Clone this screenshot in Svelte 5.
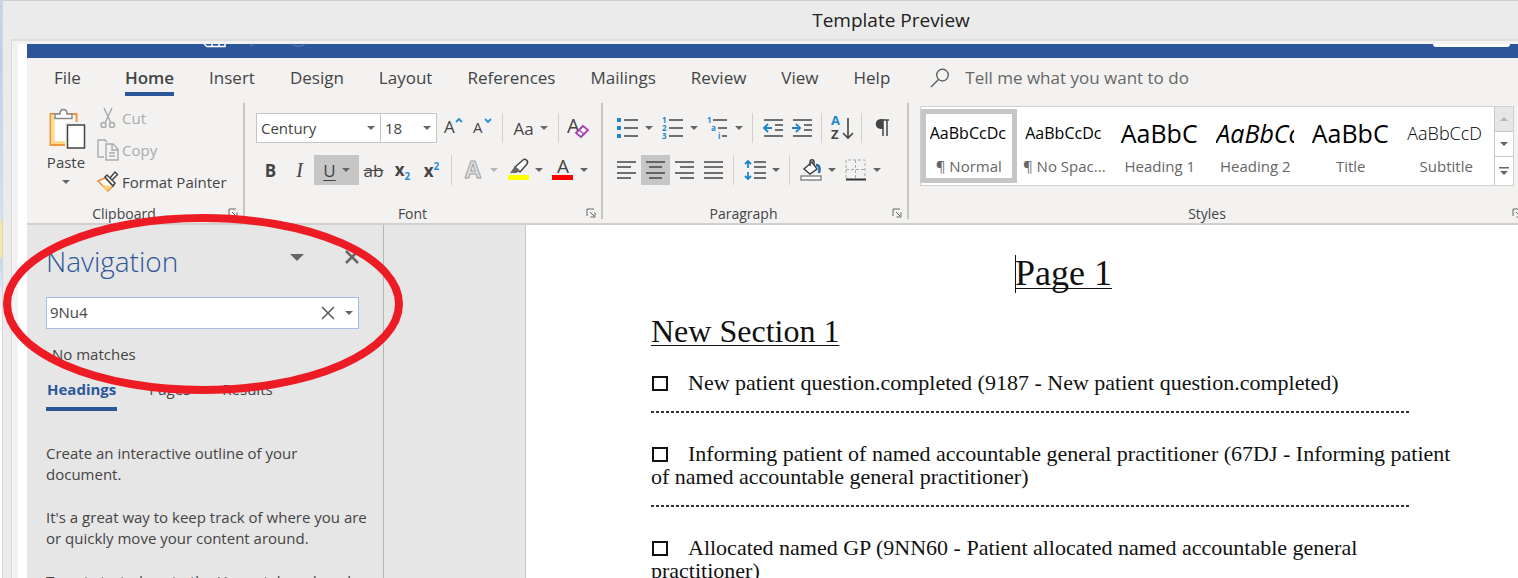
<script>
    const tabs = ['File', 'Home', 'Insert', 'Design', 'Layout', 'References', 'Mailings', 'Review', 'View', 'Help'];

    const styles = [
        { name: '¶ Normal', sample: 'AaBbCcDc', kind: 'body' },
        { name: '¶ No Spac...', sample: 'AaBbCcDc', kind: 'body' },
        { name: 'Heading 1', sample: 'AaBbC', kind: 'big' },
        { name: 'Heading 2', sample: 'AaBbCc', kind: 'big slanted' },
        { name: 'Title', sample: 'AaBbC', kind: 'big' },
        { name: 'Subtitle', sample: 'AaBbCcD', kind: 'light' }
    ];

    const questions = [
        'New patient question.completed (9187 - New patient question.completed)',
        'Informing patient of named accountable general practitioner (67DJ - Informing patient of named accountable general practitioner)',
        'Allocated named GP (9NN60 - Patient allocated named accountable general practitioner)'
    ];

    let activeTab = 'Home';
    let activeStyle = '¶ Normal';
    let search = '9Nu4';
</script>

{#snippet arrow()}
    <svg class="arrow" width="8" height="4" viewBox="0 0 8 4"><path d="M0 0h8L4 4z" /></svg>
{/snippet}

{#snippet launcher(label)}
    <button class="launcher" aria-label={label}>
        <svg width="10" height="10" viewBox="0 0 10 10" fill="none" stroke="#666"><path d="M1 8V1h7M4 4l4 4M9 4.500v4.500H4.500" /></svg>
    </button>
{/snippet}

{#snippet lines(d)}
    <svg width="21" height="20" viewBox="0 0 21 20" fill="none" stroke="#444" stroke-width="1.500"><path {d} /></svg>
{/snippet}

<div class="backdrop">
    <div class="dialog">
        <header>Template Preview</header>
        <div class="frame">
            <div class="word">
                <div class="titlebar">
                    <svg class="quick" width="104" height="3" viewBox="0 0 104 3" fill="none">
                        <path d="M0 0l3 2.500h18V0M8 0v2M15 0v2" stroke="#fff" stroke-width="1.500" />
                        <path d="M46 2l4-2M88 0c4 3 9 3 13 0" stroke="#5b80bd" />
                    </svg>
                    <span class="pill"></span>
                </div>

                <nav class="tabs">
                    {#each tabs as tab}
                        <button class:active={tab === activeTab} onclick={() => (activeTab = tab)}>{tab}</button>
                    {/each}
                    <label class="tell">
                        <svg width="20" height="20" viewBox="0 0 20 20" fill="none" stroke="#555" stroke-width="1.300"><circle cx="12.500" cy="7" r="5.800" /><path d="M8.500 11.500L1 19" /></svg>
                        <input placeholder="Tell me what you want to do" />
                    </label>
                </nav>

                <div class="ribbon">
                    <section class="group clipboard">
                        <div class="content">
                            <button class="paste">
                                <svg width="38" height="42" viewBox="0 0 38 42" fill="none">
                                    <path d="M3.500 6h26v31h-26z" fill="#fff" stroke="#f0963c" stroke-width="2" />
                                    <path d="M6 8v26.500h13" stroke="#fbdc8c" stroke-width="3" />
                                    <path d="M8 10.500V6h5c0-6 7-6 7 0h5v4.500z" fill="#fff" stroke="#888" stroke-width="1.500" />
                                    <path d="M18 14h20v28H18z" fill="#f3f2f1" />
                                    <path d="M20.500 17h17v23h-17z" fill="#fff" stroke="#444" stroke-width="1.500" />
                                </svg>
                                Paste
                                {@render arrow()}
                            </button>
                            <div class="commands">
                                <button disabled>
                                    <svg width="22" height="22" viewBox="0 0 22 22" fill="none" stroke="#aaa" stroke-width="1.500"><path d="M7 1l7 15M15 1L8 16" /><circle cx="6.500" cy="18" r="2.500" /><circle cx="15" cy="18" r="2.500" /></svg>
                                    Cut
                                </button>
                                <button disabled>
                                    <svg width="22" height="22" viewBox="0 0 22 22" fill="none" stroke="#aaa" stroke-width="1.400"><path d="M7 18H1V1h7l2 2M9 5h7l5 5v11H9zM15 5v6h6M12 14h6M12 17h6" /></svg>
                                    Copy
                                </button>
                                <button>
                                    <svg width="22" height="22" viewBox="0 0 22 22" fill="none">
                                        <path d="M1 10l7-3 8 8-5 5z" fill="#fff" stroke="#ee8a35" stroke-width="1.500" />
                                        <path d="M5 14l9 1-4 5z" fill="#fbce73" />
                                        <path d="M8 6l2-2 8 8-2 3zM13 7l5-6 2.500 2.500-5 5" fill="#fff" stroke="#444" stroke-width="1.500" />
                                    </svg>
                                    Format Painter
                                </button>
                            </div>
                        </div>
                        <footer><span>Clipboard</span>{@render launcher('Clipboard settings')}</footer>
                    </section>

                    <section class="group font">
                        <div class="content">
                            <div class="row">
                                <span class="combo family">
                                    <select aria-label="Font"><option>Century</option></select>
                                    {@render arrow()}
                                </span>
                                <span class="combo size">
                                    <select aria-label="Font size"><option>18</option></select>
                                    {@render arrow()}
                                </span>
                                <button class="tool" aria-label="Grow font">
                                    <svg width="20" height="22" viewBox="0 0 20 22"><text x="0" y="16" font-size="17" fill="#444">A</text><path d="M12 5l3-3 3 3" fill="none" stroke="#2b8fd0" stroke-width="1.800" /></svg>
                                </button>
                                <button class="tool" aria-label="Shrink font">
                                    <svg width="20" height="22" viewBox="0 0 20 22"><text x="0" y="16" font-size="15" fill="#444">A</text><path d="M12 2l3 3 3-3" fill="none" stroke="#2b8fd0" stroke-width="1.800" /></svg>
                                </button>
                                <i class="sep"></i>
                                <button class="split"><span class="case">Aa</span>{@render arrow()}</button>
                                <i class="sep"></i>
                                <button class="tool" aria-label="Clear formatting">
                                    <svg width="24" height="24" viewBox="0 0 24 24"><text x="0" y="17" font-size="20" fill="#444">A</text><path d="M9 17l7-7 5 4-7 7z" fill="#fff" stroke="#a33fb1" stroke-width="1.800" /><path d="M12 14l5 4" stroke="#a33fb1" stroke-width="1.500" /></svg>
                                </button>
                            </div>
                            <div class="row">
                                <button class="tool letter bold">B</button>
                                <button class="tool letter italic">I</button>
                                <button class="split pressed"><span class="letter underline">U</span>{@render arrow()}</button>
                                <button class="tool letter strike">ab</button>
                                <button class="tool letter bold"><span class="script">x<sub>2</sub></span></button>
                                <button class="tool letter bold"><span class="script">x<sup>2</sup></span></button>
                                <i class="sep"></i>
                                <button class="split off" aria-label="Text effects">
                                    <svg width="22" height="24" viewBox="0 0 22 24"><text x="3" y="20" font-size="23" font-weight="bold" fill="#ddd" stroke="#a5a5a5">A</text></svg>
                                    {@render arrow()}
                                </button>
                                <button class="split" aria-label="Highlight colour">
                                    <svg width="22" height="24" viewBox="0 0 22 24" fill="none"><path d="M1 17h21v5H1z" fill="#ff0" /><path d="M8 9l8-7c2-2 6 1 4 4l-7 8z" fill="#fff" stroke="#444" stroke-width="1.500" /><path d="M8 8l5 5-4 2H3z" fill="#666" /></svg>
                                    {@render arrow()}
                                </button>
                                <button class="split" aria-label="Font colour">
                                    <svg width="22" height="24" viewBox="0 0 22 24"><path d="M0 17h21v5H0z" fill="red" /><text x="5" y="15" font-size="19" fill="#444">A</text></svg>
                                    {@render arrow()}
                                </button>
                            </div>
                        </div>
                        <footer><span>Font</span>{@render launcher('Font settings')}</footer>
                    </section>

                    <section class="group paragraph">
                        <div class="content">
                            <div class="row">
                                <button class="split" aria-label="Bullets">
                                    <svg width="22" height="22" viewBox="0 0 22 22"><path d="M0 1h4v4H0zM0 9h4v4H0zM0 17h4v4H0z" fill="#1e86c8" /><path d="M7 3h14M7 11h14M7 19h14" stroke="#444" stroke-width="1.500" /></svg>
                                    {@render arrow()}
                                </button>
                                <button class="split" aria-label="Numbering">
                                    <svg width="22" height="24" viewBox="0 0 22 24"><g font-size="8" font-weight="bold" fill="#1e86c8"><text x="0" y="7">1</text><text x="0" y="15">2</text><text x="0" y="23">3</text></g><path d="M7 4h14M7 12h14M7 20h14" stroke="#444" stroke-width="1.500" /></svg>
                                    {@render arrow()}
                                </button>
                                <button class="split" aria-label="Multilevel list">
                                    <svg width="22" height="24" viewBox="0 0 22 24"><g font-size="8" font-weight="bold" fill="#1e86c8"><text x="0" y="7">1</text><text x="4" y="15">a</text><text x="11" y="23">i</text></g><path d="M6 4h14M11 12h9M15 20h5" stroke="#444" stroke-width="1.500" /></svg>
                                    {@render arrow()}
                                </button>
                                <i class="sep"></i>
                                <button class="tool" aria-label="Decrease indent">
                                    <svg width="20" height="20" viewBox="0 0 20 20" fill="none" stroke="#444" stroke-width="1.500"><path d="M1 2h19M12 7h8M12 12h8M1 18h19" /><path d="M9 10H1M5 6l-4 4 4 4" stroke="#1e86c8" stroke-width="1.800" /></svg>
                                </button>
                                <button class="tool" aria-label="Increase indent">
                                    <svg width="20" height="20" viewBox="0 0 20 20" fill="none" stroke="#444" stroke-width="1.500"><path d="M1 2h19M12 7h8M12 12h8M1 18h19" /><path d="M0 10h8M4 6l4 4-4 4" stroke="#1e86c8" stroke-width="1.800" /></svg>
                                </button>
                                <i class="sep"></i>
                                <button class="tool" aria-label="Sort">
                                    <svg width="24" height="24" viewBox="0 0 24 24"><g font-size="13" font-weight="bold"><text x="1" y="9" fill="#1e86c8">A</text><text x="1" y="23" fill="#444">Z</text></g><path d="M18 2v20M13 17l5 5 5-5" fill="none" stroke="#444" stroke-width="1.600" /></svg>
                                </button>
                                <i class="sep"></i>
                                <button class="tool" aria-label="Show paragraph marks">
                                    <svg width="14" height="18" viewBox="0 0 14 18"><path d="M6 1h8M8 1v16M12 1v16" stroke="#444" stroke-width="1.500" /><path d="M8 0v10H6C-1 10-1 0 6 0z" fill="#444" /></svg>
                                </button>
                            </div>
                            <div class="row">
                                <button class="tool" aria-label="Align left">{@render lines('M1 2h19M1 7h14M1 13h19M1 18h14')}</button>
                                <button class="tool pressed" aria-label="Centre">{@render lines('M1 2h19M4 7h13M1 13h19M4 18h13')}</button>
                                <button class="tool" aria-label="Align right">{@render lines('M1 2h19M6 7h14M1 13h19M6 18h14')}</button>
                                <button class="tool" aria-label="Justify">{@render lines('M1 2h19M1 7h19M1 13h19M1 18h19')}</button>
                                <i class="sep"></i>
                                <button class="split" aria-label="Line spacing">
                                    <svg width="22" height="20" viewBox="0 0 22 20" fill="none" stroke="#444" stroke-width="1.500"><path d="M10 2h12M10 7h12M10 13h12M10 18h12" /><path d="M4 1v7M1 4l3-3 3 3M4 12v7M1 16l3 3 3-3" stroke="#1e86c8" stroke-width="1.800" /></svg>
                                    {@render arrow()}
                                </button>
                                <i class="sep"></i>
                                <button class="split" aria-label="Shading">
                                    <svg width="22" height="22" viewBox="0 0 22 22" fill="none" stroke="#444" stroke-width="1.500"><path d="M1 17h20v4H1z" fill="#fff" stroke="#888" /><path d="M12 3l5 7-7 5-6-5z" fill="#fff" /><path d="M10 7V3c0-3 4-3 4 0v3" /><path d="M16 6c4 0 4 4 3 8" stroke="#1c6bb5" stroke-width="2.500" /></svg>
                                    {@render arrow()}
                                </button>
                                <button class="split" aria-label="Borders">
                                    <svg width="22" height="22" viewBox="0 0 22 22" fill="none"><path d="M1 19V1h19v18M10.500 1v18M1 10.500h19" stroke="#aaa" stroke-dasharray="3 2" /><path d="M1 20.500h20" stroke="#333" stroke-width="2" /></svg>
                                    {@render arrow()}
                                </button>
                            </div>
                        </div>
                        <footer><span>Paragraph</span>{@render launcher('Paragraph settings')}</footer>
                    </section>

                    <section class="group styles">
                        <div class="gallery">
                            {#each styles as style}
                                <button class="style" class:chosen={style.name === activeStyle} onclick={() => (activeStyle = style.name)}>
                                    <span class="sample {style.kind}">{style.sample}</span>
                                    <span>{style.name}</span>
                                </button>
                            {/each}
                            <div class="scroller">
                                <button class="off" aria-label="Previous styles">
                                    <svg class="arrow" width="8" height="4" viewBox="0 0 8 4"><path d="M0 4h8L4 0z" /></svg>
                                </button>
                                <button aria-label="Next styles">{@render arrow()}</button>
                                <button aria-label="More styles">
                                    <svg class="arrow" width="10" height="8" viewBox="0 0 10 8"><path d="M0 0h10v1.500H0zM1 4h8L5 8z" /></svg>
                                </button>
                            </div>
                        </div>
                        <footer><span>Styles</span>{@render launcher('Styles pane')}</footer>
                    </section>
                </div>

                <main>
                    <aside>
                        <div class="heading">
                            <h2>Navigation</h2>
                            <button aria-label="Pane options"><svg width="14" height="7" viewBox="0 0 14 7"><path d="M0 0h14L7 7z" fill="#666" /></svg></button>
                            <button aria-label="Close pane"><svg width="14" height="14" viewBox="0 0 14 14"><path d="M1 1l12 12M13 1L1 13" stroke="#666" stroke-width="2.500" /></svg></button>
                        </div>
                        <div class="search">
                            <input aria-label="Search document" bind:value={search} />
                            <button aria-label="Clear search" onclick={() => (search = '')}><svg width="12" height="12" viewBox="0 0 12 12"><path d="M0 0l12 12M12 0L0 12" stroke="#555" stroke-width="1.500" /></svg></button>
                            <button class="more" aria-label="Search options">{@render arrow()}</button>
                        </div>
                        <p class="result">No matches</p>
                        <div class="views">
                            <button class="active">Headings</button>
                            <button>Pages</button>
                            <button>Results</button>
                        </div>
                        <div class="help">
                            <p>Create an interactive outline of your document.</p>
                            <p>It's a great way to keep track of where you are or quickly move your content around.</p>
                            <p>To get started, go to the Home tab and apply</p>
                        </div>
                        <svg class="ring" width="402" height="182" viewBox="0 0 402 182" fill="none"><ellipse cx="201" cy="91" rx="196" ry="86" stroke="#ed1c24" stroke-width="8" /></svg>
                    </aside>
                    <article>
                        <h1><span class="caret"></span>Page 1</h1>
                        <h3>New Section 1</h3>
                        {#each questions as question}
                            <label class="question"><input type="checkbox" />{question}</label>
                            <hr />
                        {/each}
                    </article>
                </main>
            </div>
        </div>
    </div>
</div>

<style>
    :global(body) {
        margin: 0;
    }

    .backdrop {
        box-sizing: border-box;
        height: 100vh;
        padding-left: 2px;
        overflow: hidden;
        background: linear-gradient(#c8d4e4 0, #b9d0f3 60px, #d6e2f2 220px, #f5e9a0 222px, #f5e9a0 256px, #c3d8f5 260px, #fff 320px);
        font-family: "Open Sans", "Noto Sans", sans-serif;
        font-size: 15px;
        color: #444;
    }

    .backdrop * {
        box-sizing: border-box;
    }

    button {
        display: flex;
        align-items: center;
        justify-content: center;
        padding: 0;
        border: none;
        background: none;
        font: inherit;
        color: inherit;
    }

    input,
    select {
        min-width: 0;
        padding: 0;
        border: none;
        outline: none;
        background: none;
        font: inherit;
        color: inherit;
    }

    svg {
        flex: none;
        overflow: visible;
    }

    .arrow {
        fill: #666;
    }

    .off .arrow {
        fill: #b5b5b5;
    }

    .dialog {
        display: flex;
        flex-direction: column;
        height: 100%;
        border-top: 1px solid #cfcfcf;
        border-left: 1px solid #d5d5d5;
        background: #ebebeb;
    }

    header {
        padding-left: 261px;
        line-height: 38px;
        font-size: 19px;
        text-align: center;
        color: #222;
    }

    .frame {
        flex: 1;
        min-height: 0;
        margin-left: 8px;
        padding: 3px 0 0 6px;
        border-top: 2px solid #dedede;
        border-left: 1px solid #dadada;
        background: #f2f2f2;
    }

    .word {
        display: flex;
        flex-direction: column;
        height: 100%;
        border-left: 9px solid #fff;
    }

    .titlebar {
        display: flex;
        flex: none;
        justify-content: space-between;
        height: 14px;
        padding: 0 8px 0 177px;
        background: #2b579a;
    }

    .pill {
        width: 77px;
        height: 3px;
        border-radius: 0 0 3px 3px;
        background: #fff;
    }

    .tabs {
        display: flex;
        gap: 35px;
        height: 40px;
        padding-left: 27px;
        background: #f3f2f1;
        font-size: 17px;
    }

    .tabs button {
        border: solid transparent;
        border-width: 4px 0;
        height: 37px;
        margin-top: 1px;
    }

    .tabs button.active {
        margin-left: 9px;
        border-bottom-color: #2b579a;
        font-weight: 600;
    }

    .tell {
        display: flex;
        flex: 1;
        align-items: center;
        gap: 15px;
        margin-left: 5px;
    }

    .tell input {
        flex: 1;
        padding-bottom: 2px;
    }

    .tell input::placeholder {
        color: #666;
        opacity: 1;
    }

    .ribbon {
        display: flex;
        flex: none;
        padding: 5px 0 4px;
        overflow: hidden;
        border-bottom: 2px solid #d2d0ce;
        background: #f3f2f1;
    }

    .group {
        display: flex;
        flex: none;
        flex-direction: column;
        justify-content: space-between;
        height: 116px;
        border-right: 2px solid #c8c6c4;
    }

    .group footer {
        display: flex;
        align-items: center;
        height: 12px;
        padding-right: 5px;
        font-size: 14px;
    }

    .group footer span {
        flex: 1;
        padding-right: 7px;
        text-align: center;
    }

    .launcher {
        width: 10px;
        height: 10px;
    }

    .clipboard {
        width: 218px;
    }

    .clipboard .content {
        display: flex;
        padding-left: 19px;
    }

    .paste {
        flex-direction: column;
        justify-content: start;
        width: 40px;
        height: 90px;
        margin-right: 11px;
        padding-top: 5px;
        line-height: 24px;
    }

    .paste .arrow {
        margin-top: 6px;
    }

    .commands button {
        gap: 3px;
        height: 32px;
        padding-bottom: 2px;
    }

    .commands button:disabled {
        color: #aaa;
    }

    .font {
        width: 358px;
        padding-left: 11px;
    }

    .font footer,
    .paragraph footer {
        margin-left: -10px;
    }

    .paragraph {
        width: 306px;
        padding-left: 9px;
    }

    .row {
        display: flex;
        height: 30px;
        margin-top: 10px;
    }

    .row + .row {
        margin-top: 12px;
    }

    .row .split,
    .row .tool {
        height: 30px;
    }

    .tool {
        width: 29px;
    }

    .split {
        width: 45px;
        gap: 6px;
    }

    .pressed {
        background: #c6c6c6;
    }

    .sep {
        width: 1px;
        margin: 0 5px;
        background: #d2d0ce;
    }

    .combo {
        display: grid;
        align-items: center;
        border: 1px solid #c6c6c6;
        background: #fff;
    }

    .combo > :global(*) {
        grid-area: 1 / 1;
    }

    .combo .arrow {
        justify-self: end;
        margin-right: 5px;
        pointer-events: none;
    }

    .combo select {
        width: 100%;
        padding-left: 4px;
        appearance: none;
    }

    .family {
        width: 125px;
    }

    .size {
        width: 57px;
        margin: 0 2px 0 -1px;
    }

    .case,
    .letter {
        font-size: 17px;
    }

    .bold {
        font-weight: bold;
    }

    .italic {
        font-family: "Liberation Serif", serif;
        font-size: 20px;
        font-style: italic;
    }

    .underline {
        text-decoration: underline;
        text-underline-offset: 3px;
    }

    .strike {
        text-decoration: line-through;
    }

    .script sub,
    .script sup {
        font-size: 10px;
        line-height: 10px;
        color: #2b8fd0;
    }

    .styles {
        flex: 1;
        min-width: 0;
        margin-right: -9px;
        border: none;
    }

    .gallery {
        display: flex;
        height: 80px;
        margin: 3px 13px 0 11px;
        border: 1px solid #d2d0ce;
        background: #fff;
    }

    .style {
        flex: 1;
        flex-direction: column;
        justify-content: start;
        min-width: 0;
        margin: 2px 0;
        padding: 6px 5px 0;
        overflow: hidden;
        line-height: 30px;
        color: #666;
        white-space: nowrap;
    }

    .style.chosen {
        border: 5px solid #c6c6c6;
        padding: 1px 0 0;
    }

    .sample {
        flex: none;
        width: 78px;
        height: 36px;
        overflow: hidden;
        line-height: 36px;
        text-align: left;
        font-size: 16px;
        color: #000;
    }

    .big {
        font-size: 25px;
    }

    .slanted {
        font-style: italic;
    }

    .light {
        font-size: 18px;
        font-weight: 300;
    }

    .scroller {
        display: grid;
        width: 19px;
        border-left: 1px solid #c8c6c4;
    }

    .scroller button + button {
        border-top: 1px solid #c8c6c4;
    }

    .scroller .off {
        background: #e6e6e6;
    }

    main {
        display: flex;
        flex: 1;
        min-height: 0;
        background: #e6e6e6;
    }

    aside {
        position: relative;
        flex: none;
        width: 357px;
        padding: 15px 19px 0;
        border-right: 1px solid #b5b5b5;
    }

    .heading {
        display: flex;
        gap: 41px;
        padding-right: 5px;
    }

    .heading button {
        height: 34px;
    }

    h2 {
        flex: 1;
        margin: 0;
        line-height: 42px;
        font-size: 28px;
        font-weight: 300;
        color: #2b579a;
    }

    .search {
        display: flex;
        width: 313px;
        height: 32px;
        margin-top: 15px;
        border: 1px solid #a3bde3;
        background: #fff;
    }

    .search input {
        flex: 1;
        padding: 0 0 2px 3px;
    }

    .search button {
        width: 24px;
    }

    .search .more {
        width: 18px;
    }

    p {
        margin: 0;
        line-height: 21px;
    }

    .result {
        margin: 15px 0 0 6px;
    }

    .views {
        display: flex;
        gap: 32px;
        margin-top: 11px;
    }

    .views button {
        height: 35px;
        padding-bottom: 10px;
    }

    .views .active {
        border-bottom: 4px solid #2b579a;
        padding: 0 1px 6px;
        font-weight: bold;
        color: #2b579a;
    }

    .help {
        display: grid;
        gap: 22px;
        margin-top: 32px;
    }

    .help p {
        margin-right: -10px;
    }

    /* marker drawn round the search box */
    .ring {
        position: absolute;
        top: -12px;
        left: -25px;
        z-index: 1;
        pointer-events: none;
    }

    article {
        flex: 1;
        min-width: 0;
        margin-left: 141px;
        padding: 25px 42px 0 125px;
        border-left: 1px solid #c6c6c6;
        background: #fff;
        font-family: "Liberation Serif", serif;
        font-size: 22px;
        line-height: 23px;
        color: #111;
    }

    h1,
    h3 {
        margin: 0;
        font-weight: normal;
        text-decoration: underline 1px;
        text-decoration-skip-ink: none;
        text-underline-offset: 3px;
    }

    h1 {
        font-size: 36px;
        line-height: 46px;
        text-align: center;
    }

    h3 {
        margin: 16px 0 21px;
        font-size: 32px;
        line-height: 38px;
    }

    .caret {
        display: inline-block;
        width: 1px;
        height: 38px;
        margin-right: -1px;
        vertical-align: -8px;
        background: #111;
    }

    .question {
        display: block;
        max-width: 816px;
    }

    .question input {
        width: 16px;
        height: 15px;
        margin: 0 20px 0 1px;
        border: 2px solid #111;
        vertical-align: -1px;
        appearance: none;
    }

    hr {
        max-width: 758px;
        height: 2px;
        margin: 17px 0 29px;
        border: none;
        background: repeating-linear-gradient(90deg, #333 0 3px, transparent 3px 5px);
    }
</style>
